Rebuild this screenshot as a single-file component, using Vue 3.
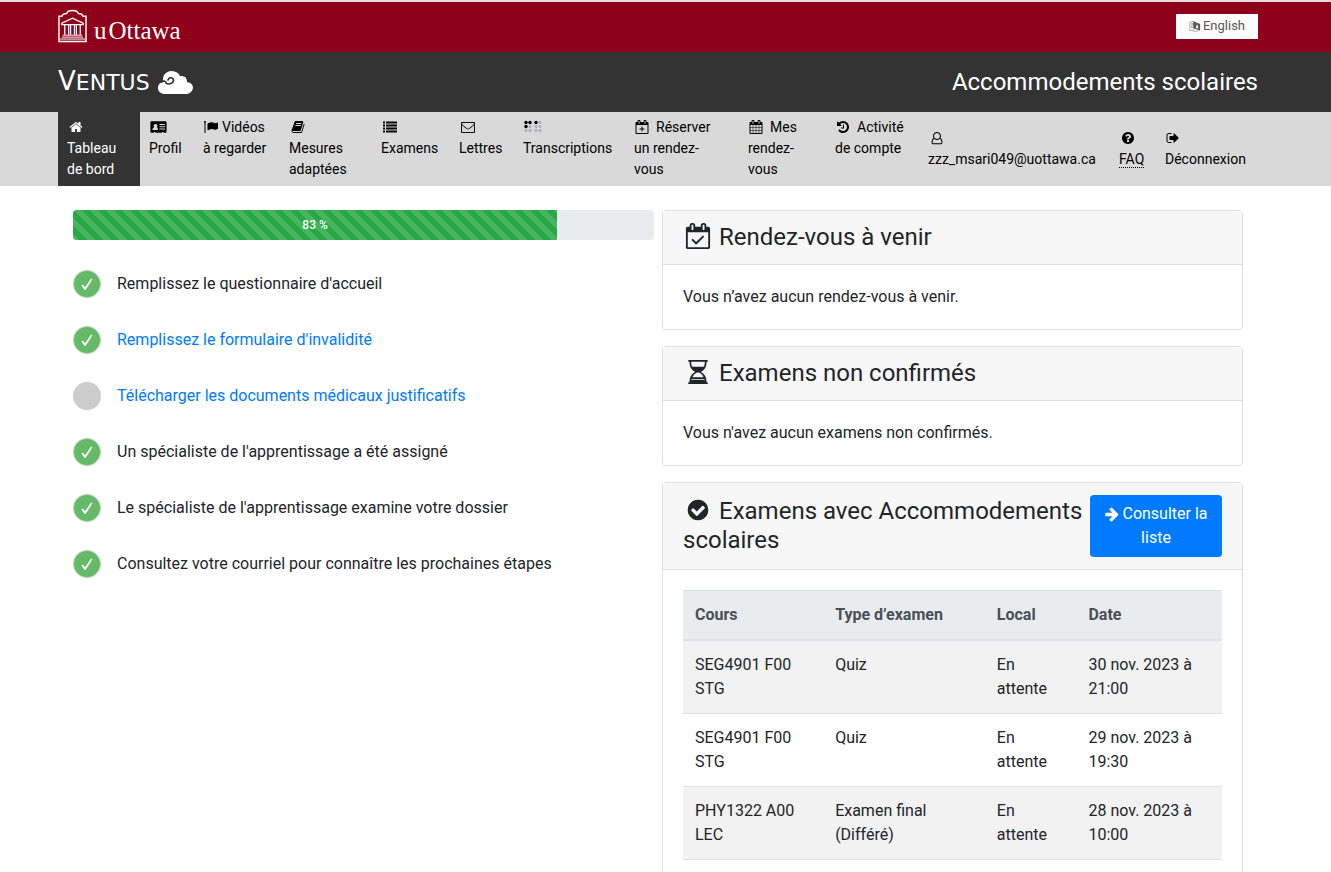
<script setup>
import { h } from 'vue'

const calendarFrame = 'M192 1664h1408v-1024h-1408zM576 448v-288q0-32-32-32h-64q-32 0-32 32v288q0 32 32 32h64q32 0 32-32zM1344 448v-288q0-32-32-32h-64q-32 0-32 32v288q0 32 32 32h64q32 0 32-32zM1728 384v1280q0 52-38 90t-90 38h-1408q-52 0-90-38t-38-90v-1280q0-52 38-90t90-38h128v-96q0-66 47-113t113-47h64q66 0 113 47t47 113v96h384v-96q0-66 47-113t113-47h64q66 0 113 47t47 113v96h128q52 0 90 38t38 90z'

const icons = {
  home: 'M1472 992v480q0 26-19 45t-45 19h-384v-384h-256v384h-384q-26 0-45-19t-19-45v-480q0-1 .5-3t.5-3l575-474 575 474q1 2 1 6zm223-69l-62 74q-8 9-21 11h-3q-13 0-21-7l-692-577-692 577q-12 8-24 7-13-2-21-11l-62-74q-8-10-7-23.5t11-21.5l719-599q32-26 76-26t76 26l244 204v-195q0-14 9-23t23-9h192q14 0 23 9t9 23v408l219 182q10 8 11 21.5t-7 23.5z',
  profile: 'M120 160h1824q120 0 120 120v1232q0 120-120 120h-264v-96h-192v96h-864v-96h-192v96h-312q-120 0-120-120v-1232q0-120 120-120zM256 1216q0 64 64 64h576q64 0 64-64q0-300-150-300q90-80 90-200q0-220-250-220t-250 220q0 120 90 200q-234 40-234 300zM1152 512v128h704v-128zM1152 800v128h704v-128zM1152 1088v128h704v-128z',
  flag: 'M256 256q0 72-64 110v1266q0 13-9.500 22.500t-22.500 9.500h-64q-13 0-22.500-9.500t-9.500-22.500v-1266q-64-38-64-110 0-53 37.500-90.500t90.500-37.500 90.500 37.500 37.500 90.500zM1792 320v763q0 34-56 64-170 92-310 92-80 0-142-28-150-72-284-72-190 0-470 160-18 11-34 11-48 0-48-56v-742q0-32 31-55 30-20 110-60 206-106 368-106 220 0 400 90 50 24 116 24 90 0 250-94 16-9 25-9 44 0 44 50z',
  book: 'M1703 478q40 57 18 129l-275 906q-19 64-76.5 107.5t-122.5 43.5h-923q-77 0-148.500-53.500t-99.500-131.500q-24-67-2-127 0-4 3-27t4-37q1-8-3-21.500t-3-19.500q2-11 8-21t16.500-23.500 16.500-23.500q23-38 45-91.500t30-91.500q3-10 .5-30t-.5-28q3-11 17-28t17-23q21-36 42-92t25-90q1-9-2.500-32t.5-28q4-13 22-30.500t22-22.500q19-26 42.500-84.500t27.500-96.500q1-8-3-25.500t-2-26.500q2-8 9-18t18-23 17-21q8-12 16.500-30.500t15-35 16-36 19.500-32 26.500-23.500 36-11.500 47.500 5.500l-1 3q38-9 51-9h761q74 0 114 56t18 130l-274 906q-36 119-71.500 153.500t-128.500 34.500h-869q-27 0-38 15-11 16-1 43 24 70 144 70h923q29 0 56-15.500t35-41.500l300-987q7-22 5-57 38 15 59 43zm-1064 2q-4 13 2 22.500t20 9.500h608q13 0 25.500-9.500t16.500-22.500l21-64q4-13-2-22.500t-20-9.500h-608q-13 0-25.500 9.500t-16.500 22.500zm-83 256q-4 13 2 22.500t20 9.500h608q13 0 25.500-9.500t16.500-22.500l21-64q4-13-2-22.500t-20-9.500h-608q-13 0-25.500 9.500t-16.500 22.500z',
  list: 'M0 192h256v256h-256zM384 192h1408v256h-1408zM0 576h256v256h-256zM384 576h1408v256h-1408zM0 960h256v256h-256zM384 960h1408v256h-1408zM0 1344h256v256h-256zM384 1344h1408v256h-1408z',
  mail: 'M160 256h1472q160 0 160 160v1088q0 160-160 160h-1472q-160 0-160-160v-1088q0-160 160-160zM128 680v824q0 32 32 32h1472q32 0 32-32v-824q-60 66-560 440-110 84-208 84t-208-84q-500-374-560-440zM160 384q-32 0-32 32 0 140 150 260l480 372q90 68 138 68t138-68l480-372q150-120 150-260 0-32-32-32z',
  calendarPlus: calendarFrame + 'M832 832h128v256h256v128h-256v256h-128v-256h-256v-128h256z',
  calendarCheck: calendarFrame + 'M1303 964l-512 512q-10 9-23 9t-23-9l-288-288q-9-10-9-23t9-22l46-46q9-9 22-9t23 9l220 220 444-444q10-9 23-9t22 9l46 46q9 9 9 22t-9 23z',
  calendar: 'M192 1664h288v-288h-288v288zm352 0h320v-288h-320v288zm-352-352h288v-320h-288v320zm352 0h320v-320h-320v320zm-352-384h288v-288h-288v288zm736 736h320v-288h-320v288zm-384-736h320v-288h-320v288zm768 736h288v-288h-288v288zm-384-352h320v-320h-320v320zm-352-864v-288q0-13-9.500-22.500t-22.500-9.500h-64q-13 0-22.500 9.500t-9.500 22.500v288q0 13 9.500 22.500t22.500 9.500h64q13 0 22.500-9.500t9.500-22.500zm736 864h288v-320h-288v320zm-384-384h320v-288h-320v288zm384 0h288v-288h-288v288zm32-480v-288q0-13-9.500-22.500t-22.500-9.500h-64q-13 0-22.500 9.500t-9.500 22.500v288q0 13 9.500 22.500t22.500 9.500h64q13 0 22.500-9.500t9.500-22.500zm384-64v1280q0 52-38 90t-90 38h-1408q-52 0-90-38t-38-90v-1280q0-52 38-90t90-38h128v-96q0-66 47-113t113-47h64q66 0 113 47t47 113v96h384v-96q0-66 47-113t113-47h64q66 0 113 47t47 113v96h128q52 0 90 38t38 90z',
  history: 'M1664 896q0 156-61 298t-164 245-245 164-298 61q-172 0-327-72.500t-264-204.500q-7-10-6.500-22.500t8.500-20.500l137-138q10-9 25-9 16 2 23 12 73 95 179 147t225 52q104 0 198.500-40.500t163.500-109.500 109.500-163.500 40.500-198.500-40.500-198.500-109.500-163.500-163.500-109.500-198.500-40.500q-98 0-188 35.500t-160 101.500l137 138q31 30 14 69-17 40-59 40h-448q-26 0-45-19t-19-45v-448q0-42 40-59 39-17 69 14l130 129q107-101 244.500-156.500t284.500-55.500q156 0 298 61t245 164 164 245 61 298zm-640-288v448q0 14-9 23t-23 9h-320q-14 0-23-9t-9-23v-64q0-14 9-23t23-9h224v-352q0-14 9-23t23-9h64q14 0 23 9t9 23z',
  user: 'M1330 890q270 110 270 540 0 110-76 186t-184 76h-888q-108 0-184-76t-76-186q0-430 270-540-78-116-78-250 0-212 150-362t362-150 362 150 150 362q0 134-78 250zM896 256q-159 0-271.500 112.500t-112.500 271.500 112.500 271.500 271.500 112.500 271.500-112.500 112.500-271.500-112.500-271.500-271.500-112.500zM1340 1564q56 0 94-40t38-98q0-340-234-434-146 160-342 160t-342-160q-234 94-234 434 0 58 38 98t94 40z',
  question: 'M1024 1376v-192q0-14-9-23t-23-9h-192q-14 0-23 9t-9 23v192q0 14 9 23t23 9h192q14 0 23-9t9-23zm256-672q0-88-55.500-163t-138.500-116-170-41q-243 0-371 213-15 24 8 42l132 100q7 6 19 6 16 0 25-12 53-68 86-92 34-24 86-24 48 0 85.500 26t37.500 59q0 38-20 61t-68 45q-63 28-115.500 86.500t-52.500 125.500v36q0 14 9 23t23 9h192q14 0 23-9t9-23q0-19 21.500-49.500t54.500-49.500q32-18 49-28.500t46-35 44.500-48 28-60.500 12.500-81zm384 192q0 209-103 385.500t-279.500 279.500-385.500 103-385.500-103-279.500-279.500-103-385.500 103-385.500 279.500-279.500 385.500-103 385.500 103 279.500 279.500 103 385.500z',
  signOut: 'M704 1440q0 4 1 20t.5 26.500-3 23.500-10 19.500-20.500 6.500h-320q-119 0-203.500-84.500t-84.500-203.500v-704q0-119 84.500-203.500t203.500-84.500h320q13 0 22.500 9.500t9.500 22.500q0 4 1 20t.5 26.500-3 23.500-10 19.500-20.500 6.500h-320q-66 0-113 47t-47 113v704q0 66 47 113t113 47h312l11.500 1 11.500 3 8 5.500 7 9 2 13.500zm928-544q0 26-19 45l-544 544q-19 19-45 19t-45-19-19-45v-288h-448q-26 0-45-19t-19-45v-384q0-26 19-45t45-19h448v-288q0-26 19-45t45-19 45 19l544 544q19 19 19 45z',
  hourglass: 'M1600 1664q26 0 26 26v76q0 26-26 26h-1408q-26 0-26-26v-76q0-26 26-26zM1600 0q26 0 26 26v76q0 26-26 26h-1408q-26 0-26-26v-76q0-26 26-26zM256 128h128q0 240 90 384h844q90-144 90-384h128q0 560-420 768 420 208 420 768h-128q0-150-30-250h-964q-30 100-30 250h-128q0-560 420-768-420-208-420-768zM474 1290h844q-92-258-312-338l-46-26h-128l-46 26q-220 80-312 338z',
  checkCircle: 'M1412 734q0-28-18-46l-91-90q-19-19-45-19t-45 19l-408 407-226-226q-19-19-45-19t-45 19l-91 90q-18 18-18 46 0 27 18 45l362 362q19 19 45 19 27 0 46-19l543-543q18-18 18-45zm252 162q0 209-103 385.500t-279.500 279.500-385.500 103-385.500-103-279.500-279.500-103-385.500 103-385.500 279.500-279.500 385.500-103 385.500 103 279.500 279.500 103 385.500z',
  arrow: 'M1600 960q0 54-37 91l-651 651q-39 37-91 37-51 0-90-37l-75-75q-38-38-38-91t38-91l293-293h-704q-52 0-84.500-37.500t-32.500-90.500v-128q0-53 32.500-90.500t84.500-37.500h704l-293-294q-38-36-38-90t38-90l75-75q38-38 90-38 53 0 91 38l651 651q37 35 37 90z'
}
icons.hourglass += 'M384 1480h1024v184h-1024z'
const viewBoxes = { profile: '0 0 2064 1792' }

const Icon = (props) =>
  h('svg', { viewBox: viewBoxes[props.name] || '0 0 1792 1792', fill: 'currentColor', 'aria-hidden': 'true' }, [
    h('path', { d: icons[props.name], 'fill-rule': 'evenodd' })
  ])
Icon.props = ['name']

const menu = [
  { icon: 'home', lines: ['', 'Tableau', 'de bord'], active: true },
  { icon: 'profile', lines: ['', 'Profil'] },
  { icon: 'flag', lines: ['Vidéos', 'à regarder'] },
  { icon: 'book', lines: ['', 'Mesures', 'adaptées'] },
  { icon: 'list', lines: ['', 'Examens'] },
  { icon: 'mail', lines: ['', 'Lettres'] },
  { icon: 'braille', lines: ['', 'Transcriptions'] },
  { icon: 'calendarPlus', lines: ['Réserver', 'un rendez-', 'vous'], wide: true },
  { icon: 'calendar', lines: ['Mes', 'rendez-', 'vous'], wide: true },
  { icon: 'history', lines: ['Activité', 'de compte'], wide: true },
  { icon: 'user', lines: ['', 'zzz_msari049@uottawa.ca'], account: true },
  { icon: 'question', lines: ['', 'FAQ'], account: true, abbr: 'Foire aux questions' },
  { icon: 'signOut', lines: ['', 'Déconnexion'], account: true }
]

const brailleDots = []
for (const x of [1, 5, 11, 15]) for (const y of [2, 6, 10]) {
  brailleDots.push({ x, y, on: (y === 2 && x !== 15) || (x === 1 && y === 6) })
}

const progress = 83.33
const steps = [
  { text: "Remplissez le questionnaire d'accueil", done: true },
  { text: "Remplissez le formulaire d'invalidité", done: true, link: true },
  { text: 'Télécharger les documents médicaux justificatifs', link: true },
  { text: "Un spécialiste de l'apprentissage a été assigné", done: true },
  { text: "Le spécialiste de l'apprentissage examine votre dossier", done: true },
  { text: 'Consultez votre courriel pour connaître les prochaines étapes', done: true }
]

const exams = [
  ['SEG4901 F00 STG', 'Quiz', 'En attente', '30 nov. 2023 à 21:00'],
  ['SEG4901 F00 STG', 'Quiz', 'En attente', '29 nov. 2023 à 19:30'],
  ['PHY1322 A00 LEC', 'Examen final (Différé)', 'En attente', '28 nov. 2023 à 10:00']
]
</script>

<template>
  <div class="page">
    <header>
      <div class="band red">
        <div class="container bar">
          <a href="#" class="uottawa">
            <svg class="crest" viewBox="0 0 30 34" fill="none" stroke="#fff" aria-hidden="true">
              <path d="M1 33V7H4Q5 4 9 4Q10 1 15 1Q20 1 21 4Q25 4 26 7H29V33Z" stroke-width="1.500" />
              <path d="M4 14L15 9L26 14V15.500H4Z" stroke-width="1.300" />
              <path d="M7 16V26M11 16V26M13 16V26M17 16V26M19 16V26M23 16V26" stroke-width="1.300" />
              <path d="M5 26.500H25M4 28.500H26M2 30.500H28" stroke-width="1" />
            </svg>
            <span>u</span><span>Ottawa</span>
          </a>
          <button type="button" class="lang">
            <svg viewBox="0 0 14 14" aria-hidden="true">
              <path d="M1 2L6 1V11L1 12ZM2 4H5M4 3Q4 7 2 9M2 6L5 9" fill="none" stroke="#aaa69f" />
              <path d="M5 1L13 4V12L5 9ZM8 9L9 5H10L11 10L10 9H9Z" fill="#5c574f" fill-rule="evenodd" />
              <path d="M4 12Q7 14 11 12" fill="none" stroke="#aaa69f" />
            </svg>
            English
          </button>
        </div>
      </div>
      <div class="band dark">
        <div class="container bar">
          <a href="#" class="ventus">
            <span><span class="initial">V</span>ENTUS</span>
            <svg viewBox="0 0 35 23" aria-hidden="true">
              <path d="M6 23Q0 22 0 17Q0 12 5 11Q4 2 12 0Q20 0 22 5Q29 4 29 11Q35 12 35 17Q34 22 29 23Z" fill="#fff" />
              <path d="M3 11Q8 9 8 12Q10 14 14 12Q17 9 14 7Q11 6 10 9" fill="none" stroke="#333" stroke-width="1.700" stroke-linecap="round" />
            </svg>
          </a>
          <h1>Accommodements scolaires</h1>
        </div>
      </div>
      <nav class="band grey">
        <ul class="container menu">
          <li v-for="item in menu" :key="item.icon" :class="{ active: item.active, account: item.account }">
            <a href="#">
              <span v-for="(line, i) in item.lines" :key="i" class="line">
                <span v-if="i === 0" class="symbol" :class="[item.icon, { wide: item.wide }]">
                  <svg v-if="item.icon === 'braille'" class="glyph" viewBox="0 0 18 13" aria-hidden="true">
                    <template v-for="(dot, n) in brailleDots" :key="n">
                      <circle v-if="dot.on" :cx="dot.x + 1" :cy="dot.y" r="1.700" fill="#000" />
                      <circle v-else :cx="dot.x + 1" :cy="dot.y" r="1" fill="none" stroke="#9c9ca8" stroke-width="1" />
                    </template>
                  </svg>
                  <Icon v-else :name="item.icon" class="glyph" />
                </span>
                <abbr v-if="item.abbr && i > 0" :title="item.abbr">{{ line }}</abbr>
                <template v-else>{{ line }}</template>
              </span>
            </a>
          </li>
        </ul>
      </nav>
    </header>

    <main class="content">
      <section>
        <div class="progress" role="progressbar" aria-valuenow="83" aria-valuemin="0" aria-valuemax="100">
          <div class="fill" :style="{ width: progress + '%' }">83&nbsp;%</div>
        </div>
        <ul class="steps">
          <li v-for="step in steps" :key="step.text">
            <span class="dot" :class="{ done: step.done }">
              <svg v-if="step.done" viewBox="0 0 28 28" aria-hidden="true">
                <path d="M8 15.500L9.500 14.500L12 17.500L18.500 8L20 8.500L12.500 20.500H11.500Z" fill="#fff" />
              </svg>
            </span>
            <a v-if="step.link" href="#">{{ step.text }}</a>
            <span v-else>{{ step.text }}</span>
          </li>
        </ul>
      </section>

      <section class="cards">
        <article class="card">
          <h2 class="head"><Icon name="calendarCheck" class="title-icon tall" />Rendez-vous à venir</h2>
          <div class="body">Vous n’avez aucun rendez-vous à venir.</div>
        </article>
        <article class="card">
          <h2 class="head"><Icon name="hourglass" class="title-icon" />Examens non confirmés</h2>
          <div class="body">Vous n'avez aucun examens non confirmés.</div>
        </article>
        <article class="card">
          <div class="head split">
            <h2><Icon name="checkCircle" class="title-icon" />Examens avec Accommodements scolaires</h2>
            <a href="#" class="btn"><Icon name="arrow" class="btn-icon" />Consulter la liste</a>
          </div>
          <div class="body">
            <table>
              <colgroup><col class="c1" /><col class="c2" /><col class="c3" /><col class="c4" /></colgroup>
              <thead>
                <tr><th>Cours</th><th>Type d’examen</th><th>Local</th><th>Date</th></tr>
              </thead>
              <tbody>
                <tr v-for="(exam, r) in exams" :key="r">
                  <td v-for="(cell, c) in exam" :key="c">{{ cell }}</td>
                </tr>
              </tbody>
            </table>
          </div>
        </article>
      </section>
    </main>
  </div>
</template>

<style>
body {
  margin: 0;
  background: #fff;
}
</style>

<style scoped>
* {
  box-sizing: border-box;
}
.page {
  height: 100vh;
  overflow: hidden;
  font: 16px/24px Roboto, "Liberation Sans", sans-serif;
  color: #212529;
}
h1, h2, ul {
  margin: 0;
  padding: 0;
  font-weight: 400;
  list-style: none;
}
a {
  color: #007bff;
  text-decoration: none;
}
.band {
  padding-right: 15px;
}
.container {
  max-width: 1200px;
  margin: 0 auto;
}
.bar {
  display: flex;
  align-items: center;
  justify-content: space-between;
  height: 100%;
}
.red {
  height: 52px;
  padding-bottom: 2px;
  border-top: 2px solid #e6dede;
  background: #8f001a;
}
.uottawa {
  display: flex;
  align-items: center;
  gap: 2px;
  color: #fff;
  font: 25px/34px "Liberation Serif", serif;
}
.uottawa span {
  padding-top: 10px;
  line-height: 24px;
}
.crest {
  width: 29px;
  height: 34px;
  margin-right: 5px;
}
.lang {
  display: flex;
  align-items: center;
  gap: 2px;
  height: 25px;
  padding: 0 13px;
  border: 0;
  background: #fdfdfb;
  color: #5c574f;
  font: 13px/20px Roboto, sans-serif;
}
.lang svg {
  width: 12px;
  height: 13px;
}
.dark {
  height: 60px;
  background: #333;
}
.ventus {
  display: flex;
  align-items: center;
  gap: 8px;
  color: #fff;
  font: 22px/30px "DejaVu Sans", sans-serif;
}
.initial {
  font-size: 26px;
}
.ventus svg {
  width: 35px;
  height: 23px;
}
h1 {
  color: #fff;
  font-size: 24px;
  line-height: 30px;
}
.grey {
  background: #d9d9d9;
}
.menu {
  display: grid;
  grid-template-columns: 82fr 54fr 86fr 92fr 78fr 64fr 111fr 114fr 87fr 93fr 191fr 46fr 102fr;
  min-height: 74px;
}
.menu a {
  display: block;
  height: 100%;
  padding: 5px 0 5px 9px;
  color: #000;
  font-size: 14px;
  line-height: 21px;
}
.menu .active a {
  background: #333;
  color: #fff;
}
.account {
  align-self: center;
}
.line {
  display: block;
  min-height: 21px;
  white-space: nowrap;
}
.symbol {
  display: inline-block;
  padding: 0 4px 0 1px;
}
.symbol.wide {
  padding-right: 7px;
}
.glyph {
  display: block;
  width: 14px;
  height: 14px;
  margin-bottom: -2px;
}
.symbol.home, .symbol.book, .symbol.list, .symbol.mail, .symbol.user, .symbol.question {
  padding-left: 2px;
}
.profile .glyph {
  width: 17px;
}
.braille .glyph {
  width: 18px;
}
abbr {
  display: inline-block;
  border-bottom: 1px dotted #000;
  line-height: 15px;
  text-decoration: none;
}
.content {
  display: grid;
  grid-template-columns: 1fr 1fr;
  gap: 8px;
  max-width: 1215px;
  margin: 0 auto;
  padding: 24px 30px 0 15px;
}
.progress {
  height: 30px;
  overflow: hidden;
  border-radius: 4px;
  background: #e9ecef;
}
.fill {
  height: 100%;
  background: linear-gradient(45deg, rgba(255,255,255,.15) 25%, transparent 25%, transparent 50%, rgba(255,255,255,.15) 50%, rgba(255,255,255,.15) 75%, transparent 75%) 0 0 / 16px 16px #28a745;
  color: #fff;
  font-size: 12px;
  font-weight: 500;
  line-height: 30px;
  text-align: center;
}
.steps {
  display: grid;
  gap: 28px;
  padding-top: 30px;
}
.steps li {
  display: flex;
  align-items: center;
  gap: 16px;
  height: 28px;
}
.dot {
  width: 28px;
  height: 28px;
  border-radius: 50%;
  background: #ccc;
}
.dot.done {
  border: 1px solid #b5ccb5;
  background: #66bb6a;
}
.dot svg {
  display: block;
}
.cards {
  display: grid;
  gap: 16px;
}
.card {
  border: 1px solid #dfdfdf;
  border-radius: 4px;
}
.head {
  padding: 12px 20px;
  border-bottom: 1px solid #dfdfdf;
  background: #f7f7f7;
}
h2 {
  font-size: 24px;
  line-height: 29px;
}
.title-icon {
  width: 24px;
  height: 24px;
  margin: 0 9px 0 3px;
  vertical-align: -3px;
}
.title-icon.tall {
  width: 26px;
  height: 26px;
  margin: -2px 8px 0 2px;
  vertical-align: -4px;
}
.split {
  display: flex;
  gap: 4px;
}
.split h2 {
  flex: 1;
  padding-top: 2px;
}
.btn {
  flex: 0 0 132px;
  padding: 7px 12px;
  border-radius: 4px;
  background: #007bff;
  color: #fff;
  text-align: center;
}
.btn-icon {
  width: 16px;
  height: 16px;
  margin-right: 2px;
  vertical-align: -3px;
}
.body {
  padding: 20px;
}
table {
  width: 100%;
  border-collapse: collapse;
  table-layout: fixed;
}
.c1 { width: 26%; }
.c2 { width: 30%; }
.c3 { width: 17%; }
.c4 { width: 27%; }
th, td {
  padding: 12px;
  border-top: 1px solid #dee2e6;
  text-align: left;
  vertical-align: top;
}
th {
  border-bottom: 2px solid #dee2e6;
  background: #e9ecef;
  color: #495057;
  font-weight: 700;
}
tbody tr:nth-child(odd) {
  background: #f2f2f2;
}
tbody tr:last-child td {
  border-bottom: 1px solid #dee2e6;
}
</style>
